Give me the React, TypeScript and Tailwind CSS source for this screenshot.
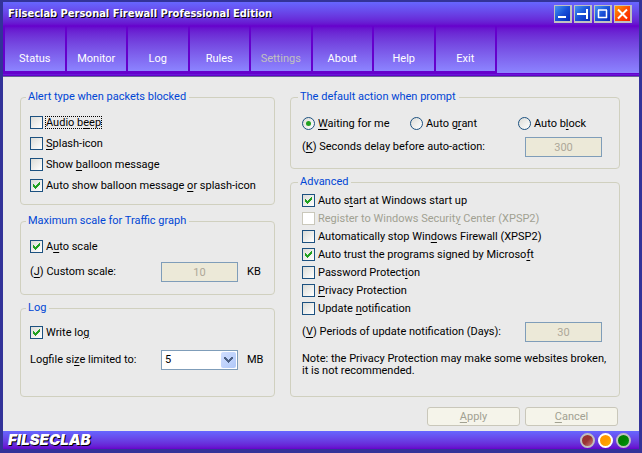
import React, { useState } from 'react';

interface MnemonicProps {
  text: string;
}

// "&" marks the letter that gets underlined
const Mnemonic: React.FC<MnemonicProps> = ({ text }) => {
  const i = text.indexOf('&');
  if (i < 0) return <>{text}</>;
  return (
    <>
      {text.slice(0, i)}
      <span className="underline underline-offset-2">{text[i + 1]}</span>
      {text.slice(i + 2)}
    </>
  );
};

interface CheckProps {
  text: string;
  defaultChecked?: boolean;
  disabled?: boolean;
  focused?: boolean;
}

const Check: React.FC<CheckProps> = ({ text, defaultChecked, disabled, focused }) => (
  <label className={`flex items-center gap-[3px] h-[13px] whitespace-nowrap ${disabled ? 'text-[#a1a192]' : ''}`}>
    <span className="relative w-[13px] h-[13px] shrink-0">
      <input
        type="checkbox"
        defaultChecked={defaultChecked}
        disabled={disabled}
        className="peer block appearance-none w-[13px] h-[13px] border border-[#1c5180] bg-linear-to-br from-[#dcdcd7] to-white disabled:border-[#cac8bb] disabled:from-white"
      />
      <svg viewBox="0 0 13 13" shapeRendering="crispEdges" className="absolute inset-0 hidden peer-checked:block pointer-events-none">
        <path d="M3 5h1v1h1v1h1v-1h1v-1h1v-1h1v-1h1v3h-1v1h-1v1h-1v1h-1v1h-1v-1h-1v-1h-1z" fill="#21a121" />
      </svg>
    </span>
    <span className={focused ? 'outline outline-dotted outline-1 -outline-offset-1 outline-black leading-[13px] px-px -mx-px' : ''}>
      <Mnemonic text={text} />
    </span>
  </label>
);

interface RadioProps {
  text: string;
  checked: boolean;
  onChange: () => void;
}

const Radio: React.FC<RadioProps> = ({ text, checked, onChange }) => (
  <label className="flex items-center gap-[3px] w-[108px] last:w-auto h-[13px] whitespace-nowrap">
    <span className="relative w-[13px] h-[13px] shrink-0">
      <input
        type="radio"
        name="action"
        checked={checked}
        onChange={onChange}
        className="peer block appearance-none w-[13px] h-[13px] rounded-full border border-[#1c5180] bg-linear-to-br from-[#dcdcd7] to-white"
      />
      <span className="absolute inset-1 hidden peer-checked:block rounded-full bg-[#21a121] pointer-events-none"></span>
    </span>
    <span><Mnemonic text={text} /></span>
  </label>
);

interface GroupProps {
  title: string;
  className?: string;
  children: React.ReactNode;
}

const Group: React.FC<GroupProps> = ({ title, className, children }) => (
  <fieldset className={`min-w-0 border border-[#d0d0bf] rounded-[4px] ${className}`}>
    <legend className="-ml-1 pl-0.5 pr-[3px] h-[14px] leading-[14px] text-[#0046d5]">{title}</legend>
    {children}
  </fieldset>
);

interface NumberFieldProps {
  id: string;
  text: string;
  value: string;
  unit?: string;
}

const NumberField: React.FC<NumberFieldProps> = ({ id, text, value, unit }) => (
  <div className="flex items-center">
    <label htmlFor={id} className="flex-1 whitespace-nowrap"><Mnemonic text={text} /></label>
    <input
      id={id}
      type="text"
      defaultValue={value}
      disabled
      className="w-[77px] h-5 border border-[#7f9db9] bg-[#ece9d8] text-center text-[#aca899]"
    />
    {unit && <span className="w-[27px] pl-[9px]">{unit}</span>}
  </div>
);

const TABS = ['Status', 'Monitor', 'Log', 'Rules', 'Settings', 'About', 'Help', 'Exit'];

const BLUE = 'bg-linear-to-br from-[#4a94f0] via-[#1a50d8] to-[#0828b8]';
const RED = 'bg-linear-to-br from-[#ff9a00] via-[#ff4a00] to-[#f81800]';

const WINDOW_BUTTONS = [
  { name: 'Minimize', color: BLUE, path: 'M3 11H11' },
  { name: 'Dock', color: BLUE, path: 'M2 8H11M12 3V13' },
  { name: 'Maximize', color: BLUE, path: 'M3 4H12M3.5 4V12M11.5 4V12M3 11.5H12' },
  { name: 'Close', color: RED, path: 'M3 3.5L12 12.5M12 3.5L3 12.5' },
];

const ACTIONS = ['&Waiting for me', 'Auto g&rant', 'Auto b&lock'];

const App: React.FC = () => {
  const [action, setAction] = useState(0);

  return (
    <div className="bg-[#333399] pt-0.5 px-[3px] pb-1 font-['Roboto',sans-serif] text-[11px] leading-3 text-black">
      <header className="border-b border-[#666699]">
        <div className="flex items-center justify-between h-6 pl-[5px] pr-[7px] bg-linear-to-b from-[#6666ff] to-[#6600cc]">
          <h1 className="font-['DejaVu_Sans_Condensed','DejaVu_Sans',sans-serif] font-bold text-white whitespace-nowrap [text-shadow:1px_1px_0_#000]">
            Filseclab Personal Firewall Professional Edition
          </h1>
          <div className="flex gap-0.5">
            {WINDOW_BUTTONS.map((b) => (
              <button
                key={b.name}
                type="button"
                aria-label={b.name}
                className={`w-[18px] h-[18px] border border-r-2 border-b-2 border-[#c0c0c0] ${b.color}`}
              >
                <svg viewBox="0 0 15 15" className="w-[15px] h-[15px]">
                  <path d={b.path} fill="none" stroke="white" strokeWidth={b.name === 'Maximize' ? 1.5 : 2} />
                </svg>
              </button>
            ))}
          </div>
        </div>
        <div className="flex h-12 border-b border-[#6600cc] bg-linear-to-b from-[#6600cc] to-[#8c84ff]">
          <nav className="grid grid-cols-8 w-[494px] pl-0.5 pb-0.5 bg-[#6600cc]">
            {TABS.map((t) => (
              <button
                key={t}
                type="button"
                disabled={t === 'Settings'}
                className="border-r-2 border-[#6600cc] bg-linear-to-b from-[#6600cc] to-[#8c84ff] bg-clip-padding pt-5 text-white disabled:text-[#c0c0c0]"
              >
                {t}
              </button>
            ))}
          </nav>
        </div>
        <div className="h-0.5 bg-[#6619d8] border-b border-[#6600cc]"></div>
      </header>

      <main className="bg-[#eaeaea] pt-[13px] pl-[17px] pr-[19px] pb-[5px]">
        <div className="grid grid-cols-[17fr_22fr] gap-[15px]">
          <div className="flex flex-col min-w-0">
            <Group title="Alert type when packets blocked" className="px-[9px] py-3 mb-[9px]">
              <div className="flex flex-col gap-2">
                <Check text="Audio b&eep" focused />
                <Check text="&Splash-icon" />
                <Check text="Show &balloon message" />
                <Check text="Auto show balloon message &or splash-icon" defaultChecked />
              </div>
            </Group>
            <Group title="Maximum scale for Traffic graph" className="px-[9px] py-3 mb-1.5">
              <div className="flex flex-col gap-[9px]">
                <Check text="A&uto scale" defaultChecked />
                <NumberField id="scale" text="(&J) Custom scale:" value="10" unit="KB" />
              </div>
            </Group>
            <Group title="Log" className="px-[9px] pt-[11px] pb-[26px]">
              <div className="flex flex-col gap-[11px]">
                <Check text="Write lo&g" defaultChecked />
                <div className="flex items-center">
                  <label htmlFor="logsize" className="flex-1 whitespace-nowrap"><Mnemonic text="Logfile si&ze limited to:" /></label>
                  <div className="relative w-[77px]">
                    <select id="logsize" className="block appearance-none w-full h-5 pl-[3px] border border-[#7f9db9] bg-white">
                      <option>5</option>
                      <option>10</option>
                      <option>20</option>
                    </select>
                    <span className="absolute top-0.5 right-0.5 bottom-0.5 w-[15px] rounded-[2px] bg-linear-to-br from-[#d0deff] to-[#b0c8f8] pointer-events-none">
                      <svg viewBox="0 0 15 16" shapeRendering="crispEdges" className="w-[15px] h-4">
                        <path d="M3 5h2v1h1v1h1v1h1v-1h1v-1h1v-1h2v2h-1v1h-1v1h-1v1h-1v1h-1v-1h-1v-1h-1v-1h-1v-1h-1z" fill="#4d6185" />
                      </svg>
                    </span>
                  </div>
                  <span className="w-[27px] pl-[9px]">MB</span>
                </div>
              </div>
            </Group>
          </div>

          <div className="flex flex-col min-w-0">
            <Group title="The default action when prompt" className="pl-[11px] pr-[17px] pt-[13px] pb-[11px] mb-1.5">
              <div className="flex flex-col gap-[7px]">
                <div className="flex">
                  {ACTIONS.map((a, i) => (
                    <Radio key={a} text={a} checked={action === i} onChange={() => setAction(i)} />
                  ))}
                </div>
                <NumberField id="delay" text="(&K) Seconds delay before auto-action:" value="300" />
              </div>
            </Group>
            <Group title="Advanced" className="pl-[11px] pr-[17px] pt-[5px] pb-[19px]">
              <div className="flex flex-col gap-[5px]">
                <Check text="Auto s&tart at Windows start up" defaultChecked />
                <Check text="Register to Windows Securit&y Center (XPSP2)" disabled />
                <Check text="Automatically stop Win&dows Firewall (XPSP2)" />
                <Check text="Auto trust the programs signed by Microso&ft" defaultChecked />
                <Check text="Password Protect&ion" />
                <Check text="&Privacy Protection" />
                <Check text="Update &notification" />
              </div>
              <div className="pt-[7px]">
                <NumberField id="period" text="(&V) Periods of update notification (Days):" value="30" />
              </div>
              <p className="mt-[11px] whitespace-nowrap">
                Note: the Privacy Protection may make some websites broken,
                <br />
                it is not recommended.
              </p>
            </Group>
          </div>
        </div>
        <div className="flex justify-end gap-[5px] mt-2.5 pr-0.5">
          <button type="button" disabled className="w-[93px] h-[19px] border border-[#c9c7ba] rounded-[3px] bg-[#f5f4ea] text-[#a1a192]">
            <Mnemonic text="&Apply" />
          </button>
          <button type="button" disabled className="w-[93px] h-[19px] border border-[#c9c7ba] rounded-[3px] bg-[#f5f4ea] text-[#a1a192]">
            <Mnemonic text="&Cancel" />
          </button>
        </div>
      </main>

      <footer className="flex items-center justify-between h-[18px] pl-[5px] pr-2 bg-linear-to-b from-[#6666ff] to-[#6600cc]">
        <span className="font-['Inter','Liberation_Sans',sans-serif] font-black italic text-[15px] text-white [text-shadow:1px_1px_0_#000]">FILSECLAB</span>
        <div className="flex gap-[3px]">
          <span className="w-[15px] h-[15px] rounded-full border-2 border-[#c0c0c0] bg-linear-to-br from-[#993333] from-50% to-[#cc8080]"></span>
          <span className="w-[15px] h-[15px] rounded-full border-2 border-white bg-linear-to-br from-[#ff9900] from-50% to-[#ffb400]"></span>
          <span className="w-[15px] h-[15px] rounded-full border-2 border-[#c0c0c0] bg-linear-to-br from-[#008000] from-50% to-[#009a10]"></span>
        </div>
      </footer>
    </div>
  );
};

export default App;
